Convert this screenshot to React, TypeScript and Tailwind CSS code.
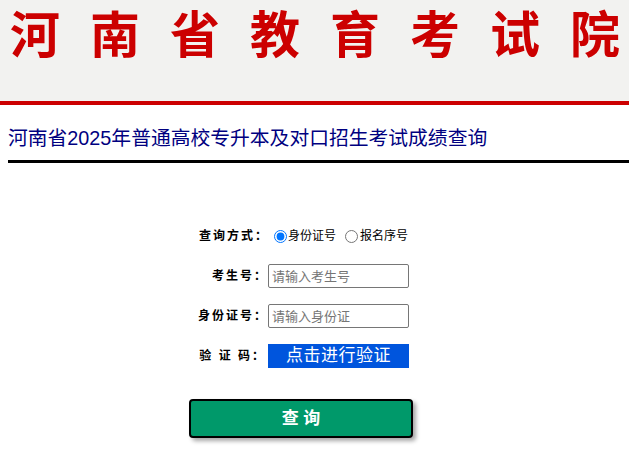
import { useState } from "react";

const cjk = { fontFamily: '"Liberation Sans", "Noto Sans CJK SC", sans-serif' };

const TITLE = ["河", "南", "省", "教", "育", "考", "试", "院"];

export default function App() {
  const [mode, setMode] = useState("sfz");

  return (
    <div className="min-h-screen w-[629px] overflow-hidden bg-white" style={cjk}>
      <header className="h-[105px] border-b-4 border-[#cc0000] bg-[#f2f2f0] pl-[10px] pt-[6px]">
        <h1 className="flex gap-[30px] whitespace-nowrap text-[50px] font-bold leading-[60px] text-[#cc0000]">
          {TITLE.map((c) => (
            <span key={c}>{c}</span>
          ))}
        </h1>
      </header>

      <div className="ml-2 mt-[21px] border-b-[3px] border-black pb-[9px]">
        <h2 className="text-[19.8px] leading-[25px] text-[#000080]">河南省2025年普通高校专升本及对口招生考试成绩查询</h2>
      </div>

      <form className="ml-[189px] mt-[61px] flex w-[224px] flex-col gap-4" onSubmit={(e) => e.preventDefault()}>
        <div className="flex h-6 items-center">
          <label className="w-[84px] shrink-0 pr-[4px] text-right text-[12px] font-bold tracking-[2px] text-black">查询方式：</label>
          <label className="flex items-center text-[12px] text-black">
            <input
              type="radio"
              name="mode"
              checked={mode === "sfz"}
              onChange={() => setMode("sfz")}
              className="mr-[1px] ml-[1px] h-[13px] w-[13px] accent-[#0075ff]"
            />
            身份证号
          </label>
          <label className="flex items-center text-[12px] text-black">
            <input
              type="radio"
              name="mode"
              checked={mode === "bm"}
              onChange={() => setMode("bm")}
              className="mr-[2px] ml-[9px] h-[13px] w-[13px] accent-[#0075ff]"
            />
            报名序号
          </label>
        </div>

        <div className="flex h-6 items-center">
          <label className="w-[79px] shrink-0 text-right text-[12px] font-bold tracking-[2px] text-black">考生号：</label>
          <input
            placeholder="请输入考生号"
            className="h-6 w-[141px] rounded-[2px] border border-[#767676] px-[3px] text-[13px] placeholder:text-[#757575] outline-none"
          />
        </div>

        <div className="flex h-6 items-center">
          <label className="w-[79px] shrink-0 text-right text-[12px] font-bold tracking-[2px] text-black">身份证号：</label>
          <input
            placeholder="请输入身份证"
            className="h-6 w-[141px] rounded-[2px] border border-[#767676] px-[3px] text-[13px] placeholder:text-[#757575] outline-none"
          />
        </div>

        <div className="flex h-6 items-center">
          <label className="w-[79px] shrink-0 pr-[2px] text-right text-[12px] font-bold tracking-[2px] text-black">验&nbsp;证&nbsp;码：</label>
          <button type="button" className="h-6 w-[141px] bg-[#0055dd] text-[17px] leading-6 tracking-[0.5px] text-white">
            点击进行验证
          </button>
        </div>

        <button
          type="submit"
          className="mt-[15px] h-[39px] w-[224px] rounded-[4px] border-2 border-black bg-[#00996a] text-[17px] font-bold text-white shadow-[3px_3px_4px_rgba(0,0,0,0.35)]"
        >
          查 询
        </button>
      </form>
    </div>
  );
}
